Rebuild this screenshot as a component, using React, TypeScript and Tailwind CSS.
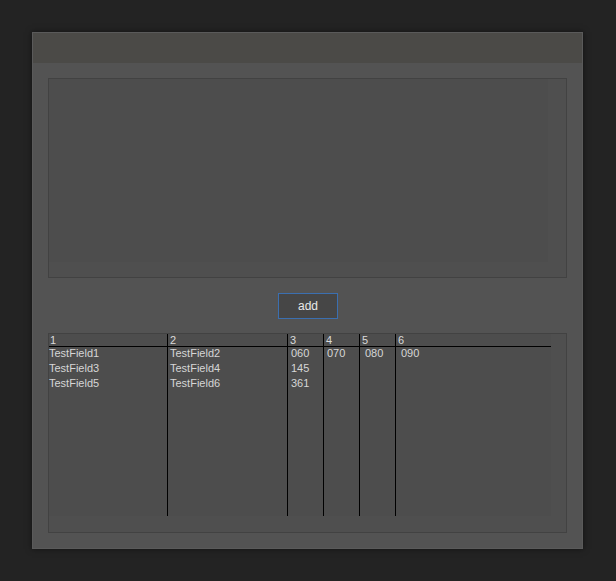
import React from "react";

const cols = [
  { h: "1", w: "w-[118px]", border: false, hp: "pl-[1px]", cp: "pl-0", cells: ["TestField1", "TestField3", "TestField5"] },
  { h: "2", w: "w-[120px]", border: true, hp: "pl-[2px]", cp: "pl-[2px]", cells: ["TestField2", "TestField4", "TestField6"] },
  { h: "3", w: "w-[36px]", border: true, hp: "pl-[2px]", cp: "pl-[3px]", cells: ["060", "145", "361"] },
  { h: "4", w: "w-[36px]", border: true, hp: "pl-[2px]", cp: "pl-[3px]", cells: ["070"] },
  { h: "5", w: "w-[36px]", border: true, hp: "pl-[2px]", cp: "pl-[5px]", cells: ["080"] },
  { h: "6", w: "flex-1", border: true, hp: "pl-[2px]", cp: "pl-[5px]", cells: ["090"] },
];

export default function App() {
  return (
    <div
      className="w-[616px] h-[581px] bg-[#232323] pt-[32px] pl-[32px]"
      style={{ fontFamily: '"Liberation Sans", Arial, sans-serif' }}
    >
      <div className="w-[551px] h-[517px] bg-[#535353] flex flex-col shadow-[0_0_6px_rgba(0,0,0,0.5)] border border-[#5a5a5a]">
        <div className="h-[30px] bg-[#4b4a47] shrink-0" />
        <div className="flex flex-col px-[15px] pt-[15px]">
          {/* top panel */}
          <div className="h-[200px] border border-[#424242] bg-[#4d4d4d] flex flex-col">
            <div className="flex flex-1">
              <div className="flex-1" />
              <div className="w-[18px] bg-[#4f4f4f]" />
            </div>
            <div className="h-[15px] bg-[#4f4f4f]" />
          </div>
          {/* button */}
          <div className="flex justify-center pt-[15px] pb-[14px]">
            <button className="w-[60px] h-[26px] border border-[#3b6fb0] bg-[#464646] text-[12px] text-[#e8e8e8] leading-none ml-[1px]">
              add
            </button>
          </div>
          {/* table panel */}
          <div className="h-[200px] border border-[#424242] bg-[#4d4d4d] flex flex-col">
            <div className="flex flex-1">
              <div className="flex w-[502px]">
                {cols.map((c, i) => (
                  <div
                    key={i}
                    className={`${c.w} flex flex-col ${c.border ? "border-l border-black" : ""}`}
                  >
                    <div className={`h-[12px] border-b border-black box-content leading-[12px] text-[11px] text-[#dadada] ${c.hp}`}>
                      {c.h}
                    </div>
                    {c.cells.map((t, j) => (
                      <div key={j} className={`h-[15px] leading-[15px] text-[11px] text-[#d6d6d6] ${c.cp} ${j === 0 ? "-mt-[1px]" : ""}`}>
                        {t}
                      </div>
                    ))}
                  </div>
                ))}
              </div>
              <div className="flex-1 bg-[#4f4f4f]" />
            </div>
            <div className="h-[16px] bg-[#4f4f4f]" />
          </div>
        </div>
      </div>
    </div>
  );
}
